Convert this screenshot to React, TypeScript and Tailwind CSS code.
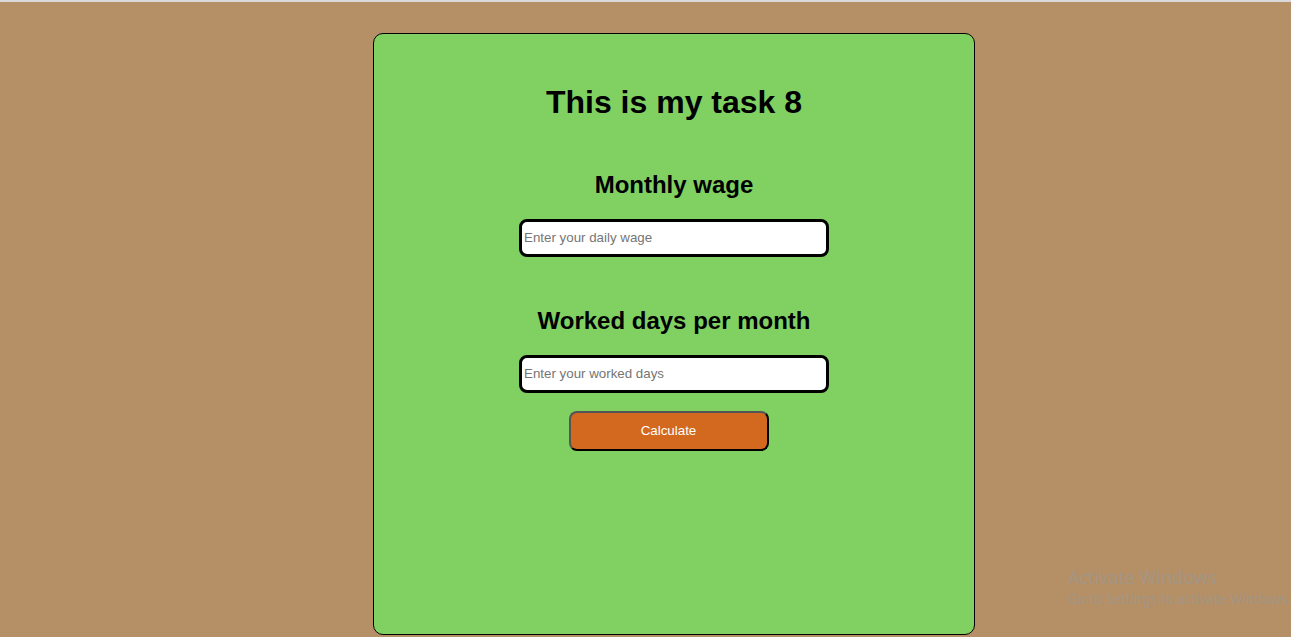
export default function App() {
  return (
    <div className="relative h-[637px] overflow-hidden bg-[#b58f66] font-['Liberation_Sans',Arial,sans-serif]">
      <div className="h-[2px] bg-[#d9d9d9]" />

      <div className="pt-[31px] pl-[373px]">
        <div className="flex h-[602px] w-[602px] flex-col items-center rounded-[10px] border border-black bg-[#81d162]">
          <h1 className="mt-[50px] text-[32px] leading-[37px] font-bold text-black">This is my task 8</h1>

          <h2 className="mt-[50px] text-[24px] leading-[28px] font-bold text-black">Monthly wage</h2>
          <input
            type="text"
            placeholder="Enter your daily wage"
            className="mt-[20px] h-[38px] w-[310px] rounded-[8px] border-[3px] border-black bg-white px-[2px] pb-[2px] text-[13.333px] outline-none placeholder:text-[#757575]"
          />

          <h2 className="mt-[50px] text-[24px] leading-[28px] font-bold text-black">Worked days per month</h2>
          <input
            type="text"
            placeholder="Enter your worked days"
            className="mt-[20px] h-[38px] w-[310px] rounded-[8px] border-[3px] border-black bg-white px-[2px] pb-[2px] text-[13.333px] outline-none placeholder:text-[#757575]"
          />

          <button className="mt-[18px] mr-[11px] h-[40px] w-[200px] rounded-[8px] border-2 border-t-[#555] border-l-[#555] border-r-black border-b-black bg-[#d2691e] text-[13.333px] text-white">
            Calculate
          </button>
        </div>
      </div>

      <div className="absolute top-[565px] left-[1068px] whitespace-nowrap font-['Noto_Sans',sans-serif] text-[#a39683]">
        <div className="text-[18px] leading-[24px]">Activate Windows</div>
        <div className="text-[13.5px] leading-[20px]">Go to Settings to activate Windows.</div>
      </div>
    </div>
  )
}
